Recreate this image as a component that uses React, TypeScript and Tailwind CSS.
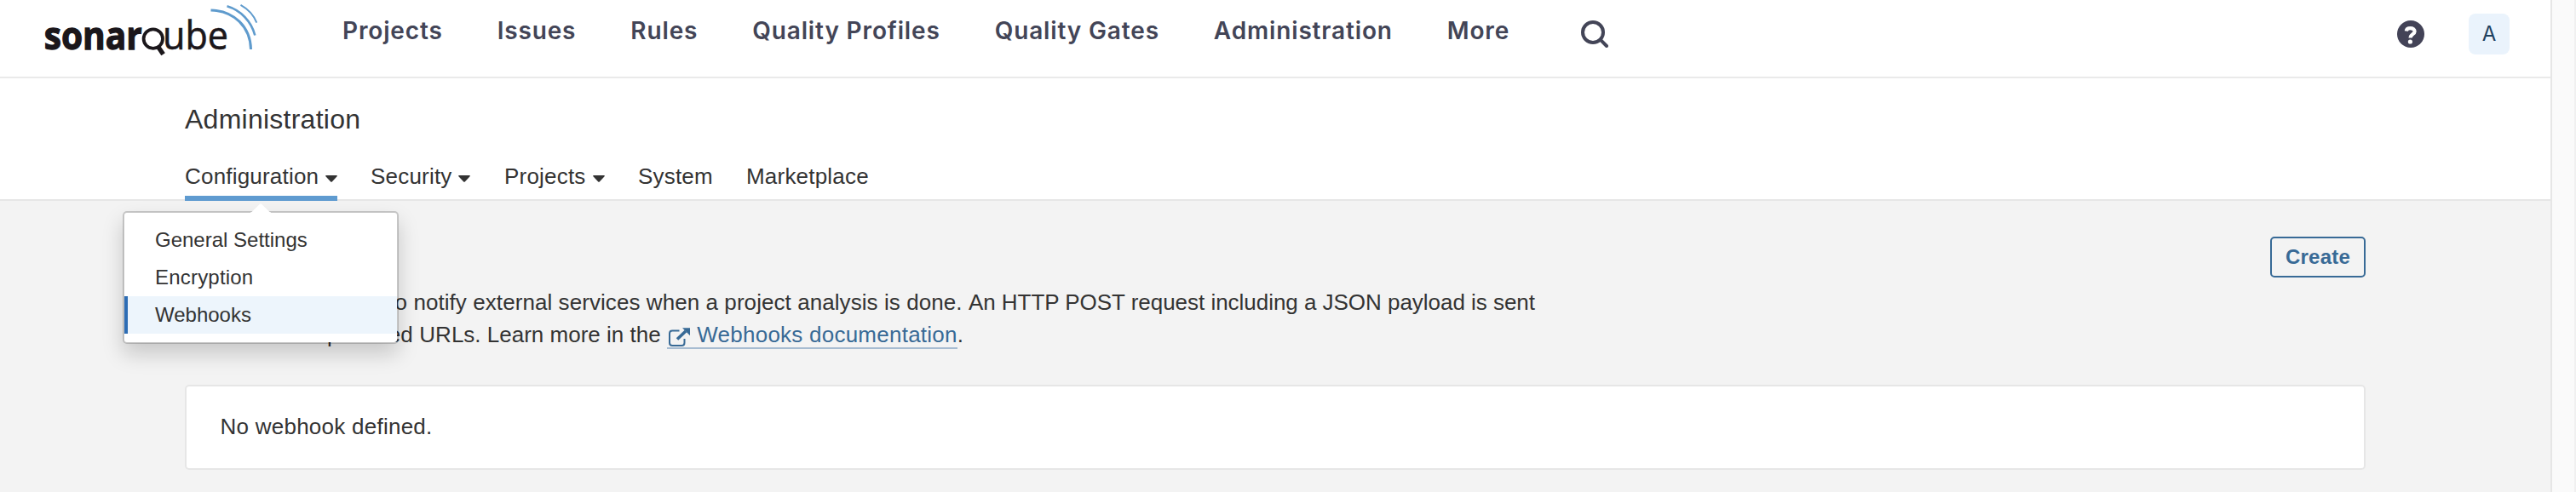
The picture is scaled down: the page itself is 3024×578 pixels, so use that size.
import type { ReactNode } from "react";

const mainNav = ["Projects", "Issues", "Rules", "Quality Profiles", "Quality Gates", "Administration", "More"];

function Logo() {
  return (
    <svg width="256" height="72" viewBox="0 0 256 72" className="block" fill="none" aria-label="sonarqube">
      <text
        x="-0.3"
        y="58.3"
        fill="#1b171b"
        stroke="#1b171b"
        strokeWidth="1.3"
        fontFamily="Open Sans"
        fontWeight="700"
        fontSize="45"
        textLength="115"
        lengthAdjust="spacingAndGlyphs"
      >
        sonar
      </text>
      <circle cx="127.8" cy="45.6" r="11.2" stroke="#1b171b" strokeWidth="3.8" />
      <path d="M134 55.5L139.6 63.8" stroke="#1b171b" strokeWidth="5.4" />
      <text
        x="139"
        y="58.3"
        fill="#1b171b"
        stroke="#1b171b"
        strokeWidth="0.6"
        fontFamily="Open Sans"
        fontWeight="400"
        fontSize="46"
        textLength="77"
        lengthAdjust="spacingAndGlyphs"
      >
        ube
      </text>
      <path d="M195.5 12C223 12.5 242 32 242.5 58" stroke="#5f9bcd" strokeWidth="3" />
      <path d="M214.5 7.3C230.5 12 243 25 247.3 41.5" stroke="#5f9bcd" strokeWidth="2.6" />
      <path d="M230.5 5.8C239 10.5 246 18 249.3 26.6" stroke="#5f9bcd" strokeWidth="2" />
    </svg>
  );
}

function SearchIcon() {
  return (
    <svg width="32" height="32" viewBox="0 0 32 32" fill="none" stroke="#434557" strokeWidth="4">
      <circle cx="14" cy="14" r="12" />
      <path d="M23.2 23.2L30 30" strokeLinecap="round" />
    </svg>
  );
}

function HelpIcon() {
  return (
    <svg width="32" height="32" viewBox="0 0 32 32" fill="none">
      <circle cx="16" cy="16" r="16" fill="#434357" />
      <path
        d="M10.8 12.5C11 10 13 9.1 15.5 9.1C18.6 9.1 20.6 10.6 20.6 13C20.6 16.3 15.6 16.2 15.6 20.6"
        stroke="#fff"
        strokeWidth="4.2"
      />
      <circle cx="15.4" cy="25" r="2.6" fill="#fff" />
    </svg>
  );
}

function Caret() {
  return (
    <svg width="14" height="8" viewBox="0 0 14 8" className="mt-[6px]">
      <path d="M1 0H13Q14.4 0.3 13.6 1.3L7.8 7.5Q7 8.2 6.2 7.5L0.4 1.3Q-0.4 0.3 1 0Z" fill="#333" />
    </svg>
  );
}

function ExternalIcon() {
  return (
    <svg width="28" height="24" viewBox="0 0 28 24" fill="none" stroke="#386a96" className="inline-block align-[-6px]">
      <path d="M14.5 4.5H6.3Q3 4.5 3 7.8V18.7Q3 22 6.3 22H17.2Q20.5 22 20.5 18.7V14" strokeWidth="2" />
      <path d="M12 14.5L22 5" strokeWidth="3.6" />
      <path d="M18 1.2H27V10.3Z" fill="#386a96" stroke="none" />
    </svg>
  );
}

function Tab({ label, className = "", caret = false, children }: { label: string; className?: string; caret?: boolean; children?: ReactNode }) {
  return (
    <li className={"relative flex h-[49px] shrink-0 items-start justify-between " + className}>
      <span className="flex h-10 items-center whitespace-nowrap">{label}</span>
      {caret && (
        <span className="flex h-10 items-center">
          <Caret />
        </span>
      )}
      {children}
    </li>
  );
}

function ConfigurationMenu() {
  return (
    <div className="absolute top-[61px] left-[-73px] z-10 w-[324px] rounded-[5px] border-2 border-black/18 bg-white bg-clip-padding py-[10px] text-[24px] leading-[44px] tracking-normal shadow-[0_12px_24px_rgba(0,0,0,0.175)]">
      <svg width="24" height="12" viewBox="0 0 24 12" className="absolute top-[-12px] left-[148px]">
        <path d="M0 12V11.5Q1.5 11 2.5 10L11 1.7Q12 0.8 13 1.7L21.5 10Q22.5 11 24 11.5V12Z" fill="#fff" />
      </svg>
      <div className="h-11 pl-9">General Settings</div>
      <div className="h-11 pl-9 tracking-[0.2px]">Encryption</div>
      <div className="h-11 border-l-4 border-[#2e6db4] bg-[#edf5fc] pl-8">Webhooks</div>
    </div>
  );
}

export default function App() {
  return (
    <div className="flex h-[578px] w-[3024px] overflow-hidden bg-[#fafafa] font-['Liberation_Sans',Arial,sans-serif] text-[#333]">
      <div className="flex w-[2996px] flex-col border-r-2 border-[#e6e6e6] bg-[#f3f3f3]">
        <header className="flex h-[92px] shrink-0 items-start border-b-2 border-[#eaeaea] bg-white pl-[52px]">
          <Logo />
          <nav className="ml-[94px] flex h-[72px] items-center gap-16 font-['Inter',sans-serif] text-[28px] font-semibold tracking-[0.85px] text-[#434557]">
            {mainNav.map((n) => (
              <a key={n} className="whitespace-nowrap">
                {n}
              </a>
            ))}
          </nav>
          <div className="mt-6 ml-[84px]">
            <SearchIcon />
          </div>
          <div className="mt-4 mr-12 ml-auto flex items-center gap-[52px]">
            <HelpIcon />
            <div className="flex size-12 items-center justify-center rounded-lg bg-[#eaf3fc] pb-px font-['Inter',sans-serif] text-[24px] text-[#1f4160]">
              A
            </div>
          </div>
        </header>

        <section className="h-[144px] shrink-0 bg-white pt-7 pl-[217px] shadow-[inset_0_-2px_0_#e6e6e6]">
          <h1 className="text-[32px] leading-10 tracking-[0.25px]">Administration</h1>
          <ul className="mt-[27px] flex text-[26px] tracking-[0.2px]">
            <Tab label="Configuration" caret className="mr-[39px] w-[179px] border-b-6 border-[#5f9bd0]">
              <ConfigurationMenu />
            </Tab>
            <Tab label="Security" caret className="mr-10 w-[117px]" />
            <Tab label="Projects" caret className="mr-[39px] w-[118px]" />
            <Tab label="System" className="mr-[39px] w-[88px]" />
            <Tab label="Marketplace" />
          </ul>
        </section>

        <main className="ml-[217px] w-[2560px] pt-[42px] text-[26px]">
          <div className="flex h-12 items-center justify-between">
            <h2 className="text-[32px] leading-10">Webhooks</h2>
            <button className="flex h-12 w-28 items-center justify-center rounded-[5px] border-2 border-[#386a96] text-[24px] font-bold tracking-[0.2px] text-[#386a96]">
              Create
            </button>
          </div>
          <p className="mt-[10px] leading-[38px] whitespace-nowrap">
            <span className="tracking-[0.07px]">
              Webhooks are used to notify external services when a project analysis is done.{" "}
            </span>
            <span className="tracking-[-0.03px]">An HTTP POST request including a JSON payload is sent</span>
            <br />
            <span className="tracking-[0.15px]">to each of the provided </span>
            <span>URLs. Learn more in the </span>
            <a className="border-b-2 border-[#a7bcd1] tracking-[0.24px] text-[#386a96]">
              <ExternalIcon /> Webhooks documentation
            </a>
            .
          </p>
          <div className="mt-10 flex h-[100px] items-center rounded-[5px] border-2 border-[#e6e6e6] bg-white pb-0.5 pl-[39.5px] tracking-[0.25px]">
            No webhook defined.
          </div>
        </main>
      </div>
      <div className="ml-auto w-0.5 bg-[#f0f0f0]" />
    </div>
  );
}
